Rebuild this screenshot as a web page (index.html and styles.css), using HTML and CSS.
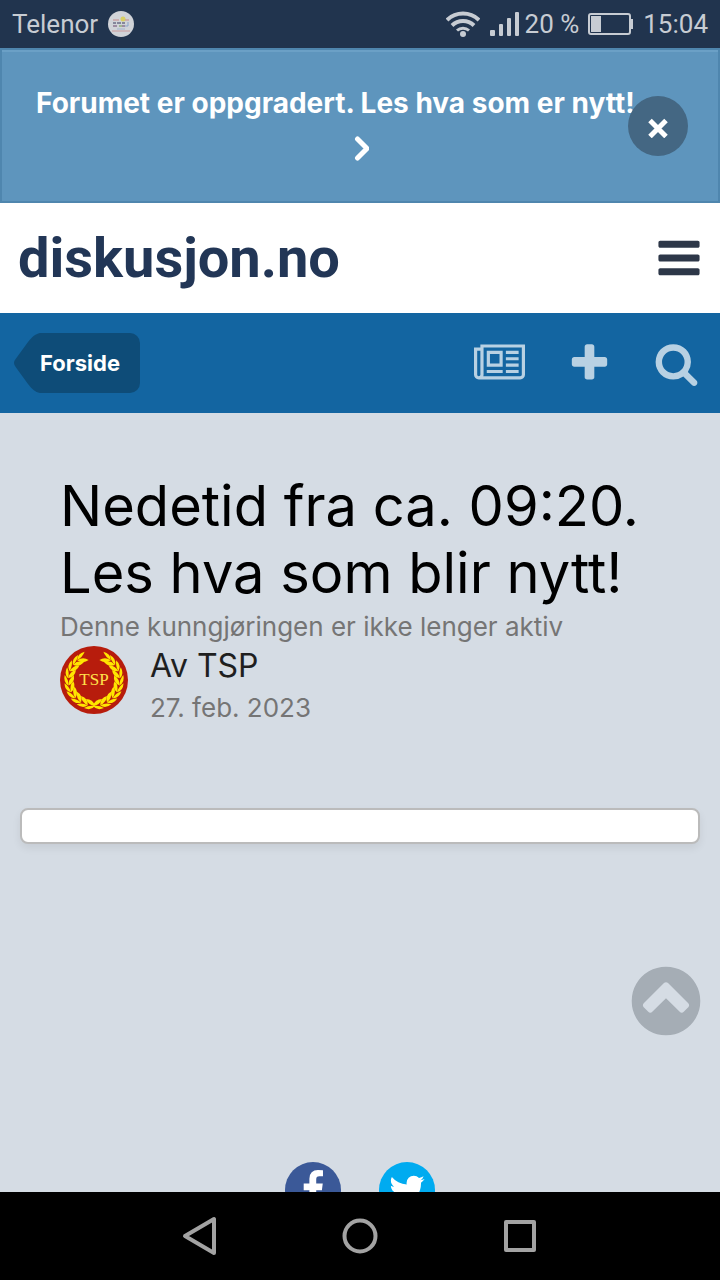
FILE: index.html
```
<!DOCTYPE html>
<html lang="no">
<head>
  <meta charset="UTF-8" />
  <meta name="viewport" content="width=device-width, initial-scale=1.0" />
  <title>Nedetid fra ca. 09:20. Les hva som blir nytt! - diskusjon.no</title>
  <link rel="stylesheet" href="styles.css">
</head>
<body>
  <div class="status-bar">
    <span>Telenor</span>
    <svg class="app-icon" viewBox="0 0 26 26" width="26" height="26" aria-hidden="true">
      <circle cx="13" cy="13" r="13" fill="#d0d3d8"/>
      <circle cx="15" cy="8" r="2.5" fill="#d8cf62"/>
      <path d="M5 9h6M17 9h4" stroke="#c58a8a" stroke-width="1"/>
      <path d="M5 12h3M9 12h4M14 12h3" stroke="#6b6f86" stroke-width="1.5"/>
      <path d="M5 15h4M14 15h3" stroke="#8c7590" stroke-width="1.5"/>
      <path d="M11 15h3" stroke="#8fae78" stroke-width="1.5"/>
      <path d="M20 11v4h-3" stroke="#8ba5cb" fill="none"/>
      <path d="M9 18h8" stroke="#a3b4cf" stroke-width="1"/>
      <path d="M4 20h18" stroke="#c99a9c" stroke-width="1"/>
    </svg>
    <div class="status-right">
      <svg viewBox="0 0 34 26" width="34" height="26" fill="none" stroke="#c7ccd3" stroke-width="4" aria-hidden="true">
        <path d="M1 9a23 23 0 0 1 32 0"/>
        <path d="M6 14.500a16 16 0 0 1 22 0"/>
        <path d="M11 19.500a9 9 0 0 1 12 0" stroke-width="3"/>
        <circle cx="17" cy="23" r="3" fill="#c7ccd3" stroke="none"/>
      </svg>
      <svg class="signal" viewBox="0 0 30 26" width="30" height="26" fill="#c7ccd3" aria-hidden="true">
        <rect x="0" y="19" width="5" height="6" rx="1"/>
        <rect x="9" y="13" width="4" height="12" rx="1"/>
        <rect x="17" y="7" width="4" height="18" rx="1"/>
        <rect x="25" y="1" width="4" height="24" rx="1"/>
      </svg>
      <span>20 %</span>
      <svg class="battery" viewBox="0 0 45 22" width="45" height="22" aria-hidden="true">
        <rect x="1" y="1" width="41" height="20" rx="2" fill="none" stroke="#c7ccd3" stroke-width="2"/>
        <rect x="3" y="3" width="10" height="16" fill="#c7ccd3"/>
        <rect x="43" y="6" width="2" height="10" fill="#c7ccd3"/>
      </svg>
      <span>15:04</span>
    </div>
  </div>

  <div class="page">
    <div class="notice">
      <a href="#nytt">
        <span>Forumet er oppgradert. Les hva som er nytt!</span>
        <svg viewBox="0 0 18 45" width="18" height="45" fill="none" stroke="#fff" stroke-width="5" stroke-linecap="round" stroke-linejoin="round" aria-hidden="true"><path d="M6.500 13l9.500 9.500-9.500 9.500"/></svg>
      </a>
      <button class="notice-close" aria-label="Lukk">
        <svg viewBox="0 0 20 24" width="20" height="24" stroke="#fff" stroke-width="5" aria-hidden="true"><path d="M2 6.500l16 16M18 6.500l-16 16"/></svg>
      </button>
    </div>

    <header class="site-header">
      <a class="logo" href="#forside">diskusjon.no</a>
      <button class="menu-button" aria-label="Meny">
        <svg viewBox="0 0 1792 1792" width="48" height="48" aria-hidden="true"><path d="M1664 1344v128q0 26-19 45t-45 19h-1408q-26 0-45-19t-19-45v-128q0-26 19-45t45-19h1408q26 0 45 19t19 45zm0-512v128q0 26-19 45t-45 19h-1408q-26 0-45-19t-19-45v-128q0-26 19-45t45-19h1408q26 0 45 19t19 45zm0-512v128q0 26-19 45t-45 19h-1408q-26 0-45-19t-19-45v-128q0-26 19-45t45-19h1408q26 0 45 19t19 45z"/></svg>
      </button>
    </header>

    <nav class="mobile-nav">
      <a class="back" href="#forside">
        <svg viewBox="0 0 26 60" width="26" height="60" aria-hidden="true"><path d="M26 0C21 1 18 4 14 9L2 25.500Q-2 30 2 34.500L14 51C18 56 21 59 26 60Z"/></svg>
        <span>Forside</span>
      </a>
      <div class="nav-icons">
        <a href="#aktivitet" aria-label="Ny aktivitet">
          <svg viewBox="0 0 2048 1792" width="51" height="45"><path d="M1024 512h-384v384h384v-384zm128 640v128h-640v-128h640zm0-768v640h-640v-640h640zm640 768v128h-512v-128h512zm0-256v128h-512v-128h512zm0-256v128h-512v-128h512zm0-256v128h-512v-128h512zm-1536 960v-960h-128v960q0 26 19 45t45 19 45-19 19-45zm1664 0v-1088h-1536v1088q0 33-11 64h1483q26 0 45-19t19-45zm128-1216v1216q0 80-56 136t-136 56h-1664q-80 0-136-56t-56-136v-1088h256v-128h1792z"/></svg>
        </a>
        <button aria-label="Opprett">
          <svg viewBox="0 0 1792 1792" width="45" height="45"><path d="M1600 736v192q0 40-28 68t-68 28h-416v416q0 40-28 68t-68 28h-192q-40 0-68-28t-28-68v-416h-416q-40 0-68-28t-28-68v-192q0-40 28-68t68-28h416v-416q0-40 28-68t68-28h192q40 0 68 28t28 68v416h416q40 0 68 28t28 68z"/></svg>
        </button>
        <a href="#sok" aria-label="Søk">
          <svg viewBox="0 0 1792 1792" width="45" height="45"><path d="M1216 832q0-185-131.500-316.500t-316.500-131.500-316.500 131.500-131.500 316.500 131.500 316.500 316.500 131.500 316.500-131.500 131.500-316.500zm512 832q0 52-38 90t-90 38q-54 0-90-38l-343-342q-179 124-399 124-143 0-273.500-55.500t-225-150-150-225-55.500-273.500 55.500-273.500 150-225 225-150 273.500-55.500 273.500 55.500 225 150 150 225 55.500 273.500q0 220-124 399l343 343q37 37 37 90z"/></svg>
        </a>
      </div>
    </nav>

    <main>
      <div class="announcement">
        <h1>Nedetid fra ca. 09:20. Les hva som blir nytt!</h1>
        <p class="inactive">Denne kunngjøringen er ikke lenger aktiv</p>
        <div class="author">
          <svg class="avatar" viewBox="0 0 68 68" width="68" height="68" role="img" aria-label="TSP">
            <defs>
              <g id="leaves">
                <path d="M35 60Q31 65 24 62Q29 59 35 60Z"/>
                <path d="M35 60Q33 53 26 53Q28 59 35 60Z"/>
              </g>
              <g id="branch">
                <use href="#leaves"/>
                <use href="#leaves" transform="rotate(16 34 34)"/>
                <use href="#leaves" transform="rotate(32 34 34)"/>
                <use href="#leaves" transform="rotate(48 34 34)"/>
                <use href="#leaves" transform="rotate(64 34 34)"/>
                <use href="#leaves" transform="rotate(80 34 34)"/>
                <use href="#leaves" transform="rotate(96 34 34)"/>
                <use href="#leaves" transform="rotate(112 34 34)"/>
                <use href="#leaves" transform="rotate(128 34 34)"/>
                <use href="#leaves" transform="rotate(142 34 34)"/>
              </g>
            </defs>
            <circle cx="34" cy="34" r="34" fill="#b71c0c"/>
            <g fill="#ffe600">
              <use href="#branch"/>
              <use href="#branch" transform="translate(68 0) scale(-1 1)"/>
            </g>
            <text x="34" y="39" text-anchor="middle">TSP</text>
          </svg>
          <div>
            <p class="name">Av TSP</p>
            <p class="date">27. feb. 2023</p>
          </div>
        </div>
      </div>
      <div class="content-box"></div>
    </main>

    <footer>
      <a class="facebook" href="#facebook" aria-label="Facebook">
        <svg viewBox="0 0 1792 1792" width="40" height="40"><path d="M1343 12v264h-157q-86 0-116 36t-30 108v189h293l-39 296h-254v759h-306v-759h-255v-296h255v-218q0-186 104-288.500t277-102.500q147 0 228 12z"/></svg>
      </a>
      <a class="twitter" href="#twitter" aria-label="Twitter">
        <svg viewBox="0 0 1792 1792" width="40" height="40"><path d="M1684 408q-67 98-162 167 1 14 1 42 0 130-38 259.500t-115.500 248.500-184.500 210.500-258 146-323 54.500q-271 0-496-145 35 4 78 4 225 0 401-138-105-2-188-64.500t-114-159.500q33 5 61 5 43 0 85-11-112-23-185.500-111.500t-73.500-205.500v-4q68 38 146 41-66-44-105-115t-39-154q0-88 44-163 121 149 294.500 238.500t371.500 99.500q-8-38-8-74 0-134 94.500-228.500t228.500-94.500q140 0 236 102 109-21 205-78-37 115-142 178 93-10 186-50z"/></svg>
      </a>
    </footer>

    <a class="to-top" href="#forside" aria-label="Til toppen">
      <svg viewBox="0 0 1792 1792" width="80" height="80"><path d="M1293 1139l102-102q19-19 19-45t-19-45l-454-454q-19-19-45-19t-45 19l-454 454q-19 19-19 45t19 45l102 102q19 19 45 19t45-19l307-307 307 307q19 19 45 19t45-19zm371-243q0 209-103 385.500t-279.500 279.500-385.500 103-385.500-103-279.500-279.500-103-385.500 103-385.500 279.500-279.500 385.500-103 385.500 103 279.500 279.500 103 385.500z"/></svg>
    </a>
  </div>

  <div class="system-nav">
    <button aria-label="Tilbake">
      <svg viewBox="0 0 40 40" width="40" height="40"><path d="M34 3v34L5 20Z"/></svg>
    </button>
    <button aria-label="Hjem">
      <svg viewBox="0 0 40 40" width="40" height="40"><circle cx="20" cy="20" r="15.500"/></svg>
    </button>
    <button aria-label="Oversikt">
      <svg viewBox="0 0 40 40" width="40" height="40"><rect x="6" y="6" width="28" height="28"/></svg>
    </button>
  </div>
</body>
</html>
```
FILE: styles.css
```
* { margin: 0; padding: 0; box-sizing: border-box; }
body {
  display: flex;
  flex-direction: column;
  height: 100vh;
  font-family: 'Inter', sans-serif;
  background: #d5dce4;
  color: #000;
}
a { text-decoration: none; }
button { border: none; background: none; cursor: pointer; }
svg { display: block; flex-shrink: 0; }

/* Phone status bar */
.status-bar {
  flex: none;
  display: flex;
  align-items: center;
  height: 48px;
  padding: 0 12px;
  font-family: 'Roboto', sans-serif;
  font-size: 26px;
  color: #c7ccd3;
  background: #21344e;
}
.app-icon { margin-left: 10px; }
.status-right { display: flex; align-items: center; margin-left: auto; }
.signal { margin: 0 5px 0 10px; }
.battery { margin: 0 10px 0 9px; }

.page {
  position: relative;
  flex: 1;
  display: flex;
  flex-direction: column;
  min-height: 0;
  overflow: hidden;
}

/* Notice */
.notice {
  flex: none;
  position: relative;
  padding: 30px 34px;
  border: 2px solid #4f86ae;
  box-shadow: inset 0 2px 0 #6ba0c6;
  background: #5e95bd;
}
.notice a {
  display: flex;
  flex-direction: column;
  font-size: 28px;
  font-weight: 700;
  line-height: 46px;
  color: #fff;
}
.notice a svg { align-self: center; }
.notice-close {
  position: absolute;
  top: 46px;
  right: 30px;
  display: flex;
  align-items: center;
  justify-content: center;
  width: 60px;
  height: 60px;
  border-radius: 50%;
  background: #446783;
}

/* Header */
.site-header {
  flex: none;
  display: flex;
  align-items: center;
  justify-content: space-between;
  height: 110px;
  padding: 0 17px 0 18px;
  background: #fff;
}
.logo {
  font-family: 'Roboto', sans-serif;
  font-size: 56px;
  font-weight: 700;
  color: #223656;
}
.menu-button svg { fill: #2d3748; }

/* Blue navigation */
.mobile-nav {
  flex: none;
  display: flex;
  align-items: center;
  justify-content: space-between;
  height: 100px;
  padding: 0 21px 0 14px;
  background: #1365a1;
}
.back {
  display: flex;
  font-size: 22px;
  font-weight: 700;
  line-height: 60px;
  color: #fff;
}
.back svg { fill: #0e4c78; }
.back span { padding-right: 20px; border-radius: 0 10px 10px 0; background: #0e4c78; }
.nav-icons { display: flex; align-items: center; gap: 42px; }
.nav-icons svg { fill: #b8d1e3; }

/* Announcement */
main { padding: 60px 20px 0; }
.announcement { padding: 0 40px; }
.announcement h1 { font-size: 56px; font-weight: 400; line-height: 67px; }
.inactive { font-size: 26px; line-height: 39px; color: #757575; }
.author { display: flex; gap: 22px; }
.avatar text { font-family: 'Liberation Serif', serif; font-size: 17px; fill: #ffe14a; }
.name { font-size: 32px; line-height: 40px; color: #1f1f1f; }
.date { font-size: 26px; line-height: 44px; color: #757575; }
.content-box {
  height: 36px;
  margin-top: 78px;
  border: 2px solid #bbb;
  border-radius: 8px;
  box-shadow: 0 4px 8px rgba(0, 0, 0, 0.07);
  background: #fff;
}

/* Share links */
footer { flex: none; display: flex; justify-content: center; gap: 38px; margin-top: 318px; }
footer a {
  display: flex;
  align-items: center;
  justify-content: center;
  width: 56px;
  height: 56px;
  border-radius: 50%;
}
footer svg { fill: #fff; }
.facebook { background: #3b5998; }
.twitter { background: #00abf0; }

.to-top { position: absolute; right: 14px; bottom: 151px; }
.to-top svg { fill: #a5adb5; }

/* Phone navigation keys */
.system-nav {
  flex: none;
  display: flex;
  align-items: center;
  justify-content: center;
  gap: 120px;
  height: 88px;
  background: #000;
}
.system-nav svg { fill: none; stroke: #a3a3a3; stroke-width: 4; stroke-linejoin: round; }
```
